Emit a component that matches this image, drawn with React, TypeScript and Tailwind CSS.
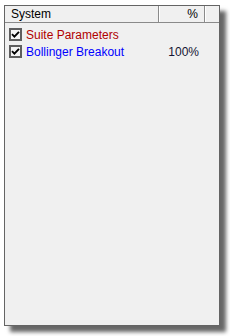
const font = "font-['Liberation_Sans',Arial,sans-serif]";

function CheckBox() {
  return (
    <div className="flex h-[13px] w-[13px] shrink-0 items-center justify-center border-2 border-[#5e5e5e] bg-[#f4f4f4]">
      <svg viewBox="0 0 9 9" className="h-[9px] w-[9px]" aria-hidden="true">
        <path d="M1 4.2 L3.4 6.6 L8 1.8" fill="none" stroke="#000" strokeWidth="1.9" />
      </svg>
    </div>
  );
}

function Row({ name, color, pct }: { name: string; color: string; pct?: string }) {
  return (
    <div className="flex h-[17px] items-center pl-[4px]">
      <CheckBox />
      <span className={`ml-[4px] w-[136px] text-[12px] ${color}`}>{name}</span>
      <span className="w-[37px] text-right text-[12px] text-[#141432]">{pct}</span>
    </div>
  );
}

export default function App() {
  return (
    <div className={`h-[336px] w-[230px] bg-white pl-[4px] pt-[5px] ${font}`}>
      <div className="flex h-[321px] w-[216px] flex-col border border-[#646464] bg-[#f0f0f0] shadow-[6px_6px_4px_rgba(0,0,0,0.6)]">
        <div className="flex h-[17px] border-b border-[#8a8a8a] text-[12px] text-black">
          <div className="flex w-[154px] items-center border-r border-[#8a8a8a] pl-[6px]">System</div>
          <div className="flex w-[46px] items-center justify-end border-r border-[#8a8a8a] pr-[6px] shadow-[inset_1px_0_0_#ffffff]">%</div>
          <div className="flex-1 shadow-[inset_1px_0_0_#ffffff]" />
        </div>
        <div className="pt-[3px]">
          <Row name="Suite Parameters" color="text-[#b00000]" />
          <Row name="Bollinger Breakout" color="text-[#0000ff]" pct="100%" />
        </div>
      </div>
    </div>
  );
}
